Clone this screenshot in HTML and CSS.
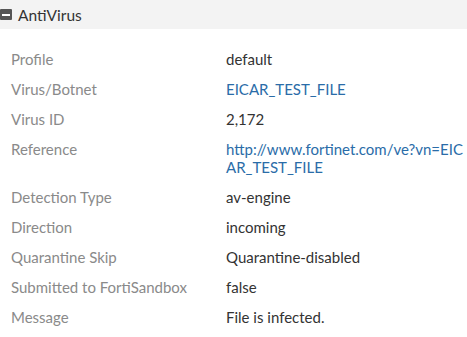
FILE: index.html
```html
<!DOCTYPE html>
<html>
<head>
<meta charset="utf-8">
<link rel="stylesheet" href="styles.css">
</head>
<body>
<div class="section">
  <div class="section-header">
    <span class="toggle"><span class="bar"></span></span>
    <span class="title">AntiVirus</span>
  </div>
  <div class="details">
    <div class="row"><div class="label">Profile</div><div class="value">default</div></div>
    <div class="row"><div class="label">Virus/Botnet</div><div class="value link">EICAR_TEST_FILE</div></div>
    <div class="row"><div class="label">Virus ID</div><div class="value">2,172</div></div>
    <div class="row"><div class="label">Reference</div><div class="value link">http://www.fortinet.com/ve?vn=EICAR_TEST_FILE</div></div>
    <div class="row"><div class="label">Detection Type</div><div class="value">av-engine</div></div>
    <div class="row"><div class="label">Direction</div><div class="value">incoming</div></div>
    <div class="row"><div class="label">Quarantine Skip</div><div class="value">Quarantine-disabled</div></div>
    <div class="row"><div class="label">Submitted to FortiSandbox</div><div class="value">false</div></div>
    <div class="row"><div class="label">Message</div><div class="value">File is infected.</div></div>
  </div>
</div>
</body>
</html>
```
FILE: styles.css
```css
html, body {
  margin: 0;
  padding: 0;
  background: #fff;
}
body {
  font-family: Lato, "Open Sans", sans-serif;
  font-size: 15px;
  color: #333;
}
.section-header {
  height: 29px;
  background: #f3f3f3;
  display: flex;
  align-items: center;
  gap: 6px;
}
.toggle {
  width: 12px;
  height: 11px;
  background: #555;
  border-radius: 1px;
  display: flex;
  align-items: center;
  justify-content: center;
}
.toggle .bar {
  width: 8px;
  height: 2px;
  background: #fff;
}
.title {
  font-size: 15.5px;
  color: #333;
}
.details {
  padding-top: 15px;
}
.row {
  display: grid;
  grid-template-columns: 215px 240px;
  padding: 6px 0 6px 11px;
  line-height: 18px;
}
.label {
  color: #8a8a8a;
}
.value {
  color: #333;
  word-break: break-all;
}
.value.link {
  color: #2a6ca8;
}
```
